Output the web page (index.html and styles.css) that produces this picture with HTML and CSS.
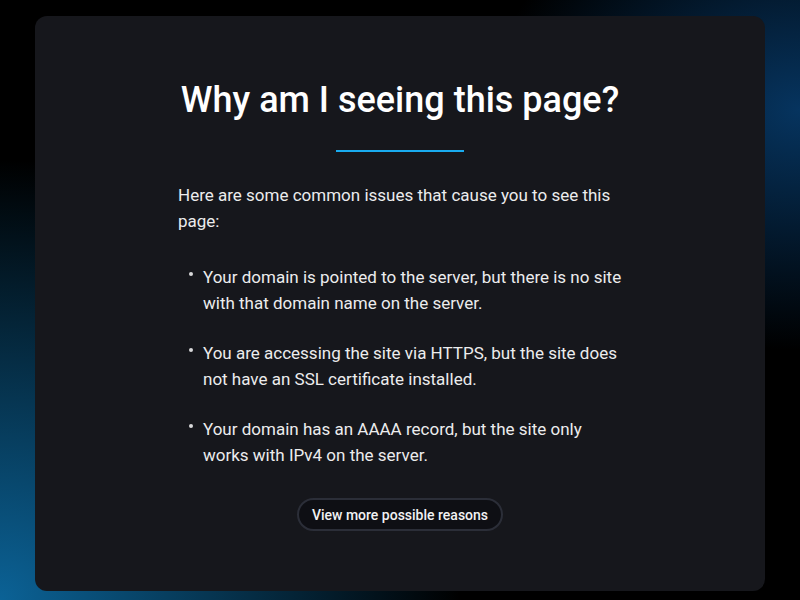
FILE: index.html
```html
<!DOCTYPE html>
<html lang="en">
<head>
<meta charset="utf-8">
<title>Why am I seeing this page?</title>
<link rel="stylesheet" href="styles.css">
</head>
<body>
  <main class="card">
    <h1 class="title">Why am I seeing this page?</h1>
    <div class="divider"></div>
    <div class="content">
      <p class="intro">Here are some common issues that cause you to see this page:</p>
      <ul class="reasons">
        <li>Your domain is pointed to the server, but there is no site with that domain name on the server.</li>
        <li>You are accessing the site via HTTPS, but the site does not have an SSL certificate installed.</li>
        <li>Your domain has an AAAA record, but the site only works with IPv4 on the server.</li>
      </ul>
    </div>
    <a class="more-btn" href="#">View more possible reasons</a>
  </main>
</body>
</html>
```

FILE: styles.css
```css
html {
  overflow: hidden;
  height: 100%;
  background: #000;
}

body {
  margin: 0;
  height: 100vh;
  overflow-y: auto;
  box-sizing: border-box;
  padding: 16px 35px;
  font-family: Roboto, "Liberation Sans", sans-serif;
  color: #ececed;
  background:
    radial-gradient(ellipse 310px 240px at 800px 110px, rgba(6, 52, 95, 1), rgba(6, 52, 95, 0)),
    radial-gradient(ellipse 460px 440px at 0 600px, rgba(11, 98, 150, 1), rgba(11, 98, 150, 0)),
    #000;
}

.card {
  width: calc(100vw - 70px);
  box-sizing: border-box;
  background: #16171c;
  border-radius: 12px;
  padding: 63px 0 60px;
  display: flex;
  flex-direction: column;
  align-items: center;
}

.title {
  margin: 0;
  font-size: 36px;
  line-height: 1.2;
  font-weight: 500;
  color: #fff;
}

.divider {
  width: 128px;
  height: 2px;
  margin-top: 28px;
  background: #19abef;
}

.content {
  width: 444px;
  margin-top: 30px;
}

.intro {
  margin: 0 0 30px;
  font-size: 17px;
  line-height: 26px;
}

.reasons {
  margin: 0;
  padding: 0;
  list-style: none;
  font-size: 17px;
  line-height: 26px;
}

.reasons li {
  display: flex;
  margin-right: -4px;
}

.reasons li + li {
  margin-top: 24px;
}

.reasons li::before {
  content: "";
  flex: none;
  width: 4px;
  height: 4px;
  margin: 8px 10px 0 11px;
  border-radius: 50%;
  background: #d8d8da;
}

.more-btn {
  margin-top: 30px;
  height: 33px;
  box-sizing: border-box;
  padding: 0 13px;
  display: flex;
  align-items: center;
  border: 2px solid #2b2e38;
  border-radius: 999px;
  background: #0e0f14;
  color: #f2f2f3;
  font-size: 14px;
  font-weight: 500;
  text-decoration: none;
}
```
